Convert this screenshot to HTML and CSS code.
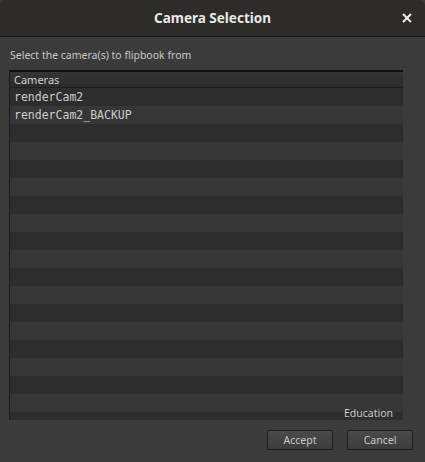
FILE: index.html
```html
<!DOCTYPE html>
<html lang="en">
<head>
    <meta charset="UTF-8">
    <title>Camera Selection</title>
    <link rel="stylesheet" href="styles.css">
</head>
<body>
    <div class="dialog">
        <div class="titlebar">
            <span class="title">Camera Selection</span>
            <svg class="close" width="10" height="10" viewBox="0 0 10 10">
                <path d="M1 1 L9 9 M9 1 L1 9" stroke="#f0f0f0" stroke-width="2" fill="none"/>
            </svg>
        </div>
        <div class="content">
            <p class="prompt">Select the camera(s) to flipbook from</p>
            <div class="list">
                <div class="list-header">Cameras</div>
                <div class="rows" id="rows">
                    <div class="row">renderCam2</div>
                    <div class="row">renderCam2_BACKUP</div>
                </div>
                <span class="watermark">Education</span>
            </div>
            <div class="buttons">
                <button class="btn">Accept</button>
                <button class="btn">Cancel</button>
            </div>
        </div>
    </div>
    <script>
        // fill the rest of the list with empty striped rows
        const rows = document.getElementById("rows");
        for (let i = 0; i < 18; i++) {
            const div = document.createElement("div");
            div.className = "row";
            rows.appendChild(div);
        }
    </script>
</body>
</html>
```

FILE: styles.css
```css
body {
    margin: 0;
    background: #3b3b3b;
    font-family: "Noto Sans", "DejaVu Sans", sans-serif;
}
.dialog {
    width: 425px;
    height: 462px;
    display: flex;
    flex-direction: column;
    background: #3b3b3b;
}
.titlebar {
    height: 36px;
    flex: none;
    background: #2d2c29;
    border-bottom: 1px solid #161616;
    border-radius: 6px 6px 0 0;
    display: flex;
    align-items: center;
    justify-content: center;
    position: relative;
}
.title {
    color: #e8e8e6;
    font-size: 13.5px;
    font-weight: bold;
}
.close {
    position: absolute;
    right: 13px;
    top: 13px;
}
.content {
    flex: 1;
    display: flex;
    flex-direction: column;
    padding: 0 0 0 9px;
}
.prompt {
    margin: 11px 0 0 1px;
    height: 22px;
    color: #c8c8c8;
    font-size: 10.5px;
}
.list {
    width: 393px;
    height: 350px;
    border-left: 1px solid #1c1c1c;
    overflow: hidden;
    position: relative;
}
.list-header {
    height: 15px;
    border-top: 2px solid #0e0e0e;
    border-bottom: 1px solid #1e1e1e;
    background: linear-gradient(#353535, #2a2a2a);
    color: #cfcfcf;
    font-size: 11px;
    line-height: 15px;
    padding-left: 4px;
}
.row {
    height: 18px;
    line-height: 18px;
    padding-left: 4px;
    background: #2d2d2d;
    color: #cccccc;
    font-family: "DejaVu Sans Mono", monospace;
    font-size: 11.5px;
}
.row:nth-child(even) {
    background: #363636;
}
.watermark {
    position: absolute;
    right: 10px;
    bottom: 0;
    color: #c8c8c8;
    font-size: 10.5px;
    line-height: 14px;
}
.buttons {
    display: flex;
    justify-content: flex-end;
    gap: 14px;
    padding: 10px 12px 0 0;
}
.btn {
    width: 66px;
    height: 20px;
    border: 1px solid #1e1e1e;
    border-radius: 2px;
    background: linear-gradient(#4a4a4a, #3c3c3c);
    color: #c8c8c8;
    font-family: "Noto Sans", "DejaVu Sans", sans-serif;
    font-size: 10.5px;
    padding: 0;
}
```
